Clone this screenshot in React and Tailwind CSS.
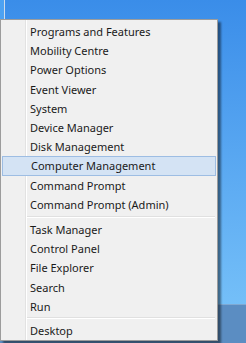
const groups = [
  [
    'Programs and Features',
    'Mobility Centre',
    'Power Options',
    'Event Viewer',
    'System',
    'Device Manager',
    'Disk Management',
    'Computer Management',
    'Command Prompt',
    'Command Prompt (Admin)',
  ],
  ['Task Manager', 'Control Panel', 'File Explorer', 'Search', 'Run'],
  ['Desktop'],
];

const active = 'Computer Management';

function Item({ label }) {
  const on = label === active;
  return (
    <div
      className={`flex h-[19.2px] items-center pl-[28px] ${
        on ? 'border border-[#9dbde3] bg-[#d4e3f4] pl-[27px]' : ''
      }`}
    >
      {label}
    </div>
  );
}

export default function App() {
  return (
    <div className="relative h-[343px] w-[246px] overflow-hidden font-['Noto_Sans',sans-serif]">
      <div className="flex h-full flex-col">
        <div className="flex flex-1 bg-gradient-to-b from-[#3a8de9] to-[#74bff8]">
          <div className="h-[19px] w-[4px] bg-[#4da2f2]" />
          <div className="h-[19px] w-px bg-[#cfdcea]" />
        </div>
        <div className="h-[39px] border-t border-[#7fa9d3] bg-[#5b8dc2]" />
      </div>

      <div className="absolute left-0 top-[19px] w-[218px] border border-[#9c9c9c] bg-[#f0f0f0] px-px pb-0 pt-[2px] text-[11px] leading-none text-[#1a1a1a] shadow-[3px_3px_2px_rgba(0,0,0,0.45)]">
        <div className="absolute bottom-0 left-[24px] top-0 w-[2px] border-l border-[#e2e2e2] bg-white" />
        <div className="relative">
          {groups.map((group, i) => (
            <div key={i}>
              {i > 0 && (
                <div className={`flex items-center pl-[25px] pr-px ${i === 1 ? 'h-[6px]' : 'h-[5px]'}`}>
                  <div className="h-[2px] flex-1 border-t border-[#e0e0e0] bg-white" />
                </div>
              )}
              {group.map((label) => (
                <Item key={label} label={label} />
              ))}
            </div>
          ))}
        </div>
      </div>
    </div>
  );
}
